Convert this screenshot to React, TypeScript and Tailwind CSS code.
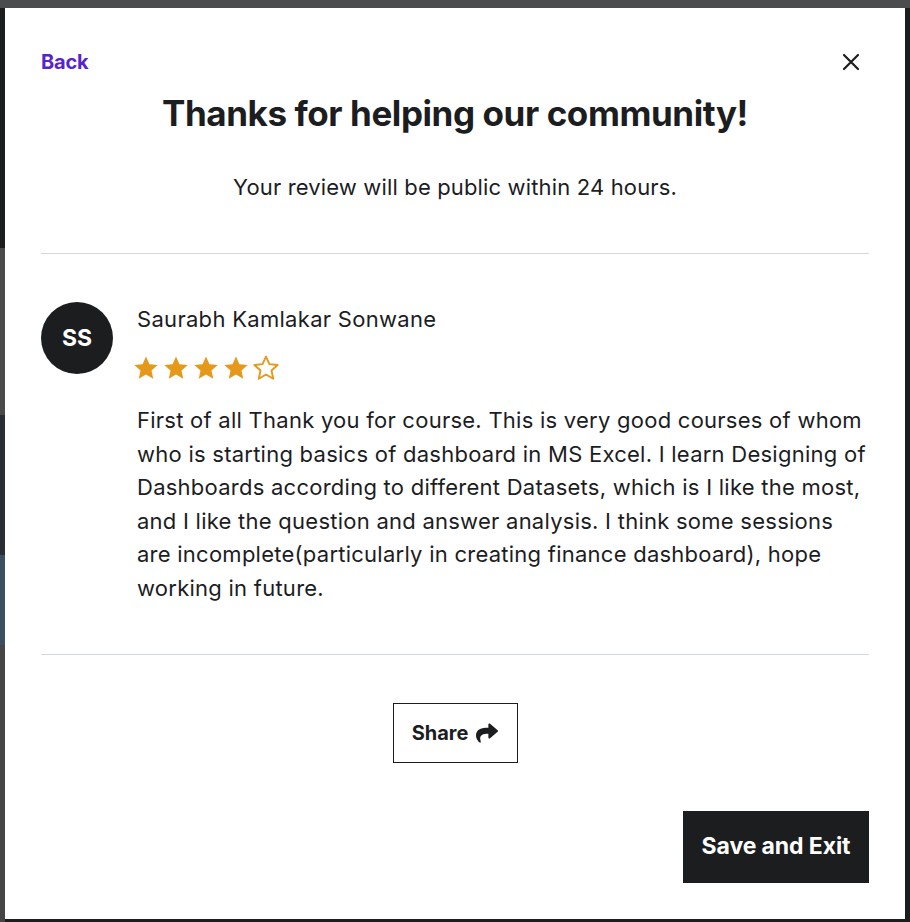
import React from "react";
import { FaShare } from "react-icons/fa";

const Star = ({ filled }: { filled: boolean }) => (
  <svg width="28" height="28" viewBox="0 0 24 24" className="shrink-0">
    <path
      d="M12 2.2l2.95 6.5 7.05.75-5.3 4.75 1.5 7-6.2-3.6-6.2 3.6 1.5-7L2 9.45l7.05-.75z"
      fill={filled ? "#e59819" : "none"}
      stroke="#e59819"
      strokeWidth={filled ? 0 : 1.6}
      strokeLinejoin="round"
    />
  </svg>
);

export default function App() {
  return (
    <div
      className="w-[910px] h-[922px] bg-[#1c1d1f] flex flex-col overflow-hidden"
      style={{ fontFamily: "Inter, 'Noto Sans', sans-serif" }}
    >
      <div className="h-[8px] bg-[#4b4c4d] shrink-0" />
      <div className="flex flex-1">
        <div className="w-[5px] flex flex-col shrink-0">
          <div className="h-[240px] bg-[#1c1d1f]" />
          <div className="h-[167px] bg-[#4a4a4a]" />
          <div className="h-[140px] bg-[#2a2d33]" />
          <div className="h-[90px] bg-[#3a5060]" />
          <div className="flex-1 bg-[#454545]" />
        </div>
        <div className="w-[900px] h-[911px] bg-white px-[36px] flex flex-col text-[#1c1d1f]">
          <div className="flex items-center justify-between mt-[40px] h-[28px]">
            <span className="text-[#5624d0] font-bold text-[20px] tracking-[-0.2px]">Back</span>
            <svg width="20" height="20" viewBox="0 0 20 20" className="mr-[8px]">
              <path d="M3 3L17 17M17 3L3 17" stroke="#1c1d1f" strokeWidth="2.2" strokeLinecap="round" />
            </svg>
          </div>
          <h1 className="text-center font-bold text-[35px] leading-[44px] mt-[15px] tracking-[-0.42px]">
            Thanks for helping our community!
          </h1>
          <p className="text-center text-[22px] leading-[30px] mt-[37px] tracking-[0.15px]">
            Your review will be public within 24 hours.
          </p>
          <div className="h-px bg-[#d1d7dc] mt-[51px] shrink-0" />
          <div className="flex gap-[24px] pt-[48px] pb-[48px]">
            <div className="w-[72px] h-[72px] rounded-full bg-[#1c1d1f] text-white font-bold text-[23px] flex items-center justify-center shrink-0">
              SS
            </div>
            <div className="flex flex-col">
              <div className="text-[22px] leading-[30px] mt-[2px] tracking-[0.3px]">Saurabh Kamlakar Sonwane</div>
              <div className="flex gap-[2px] ml-[-5px] mt-[20px]">
                <Star filled />
                <Star filled />
                <Star filled />
                <Star filled />
                <Star filled={false} />
              </div>
              <p className="text-[22px] leading-[33.6px] mt-[22px] tracking-[0.25px]">
                First of all Thank you for course. This is very good courses of whom who is starting basics of
                dashboard in MS Excel. I learn Designing of Dashboards according to different Datasets, which is I
                like the most, and I like the question and answer analysis. I think some sessions are
                incomplete(particularly in creating finance dashboard), hope working in future.
              </p>
            </div>
          </div>
          <div className="h-px bg-[#d1d7dc] shrink-0" />
          <div className="flex justify-center mt-[48px]">
            <button className="w-[125px] h-[60px] border border-[#1c1d1f] flex items-center justify-center gap-[8px] font-bold text-[20px]">
              Share
              <FaShare className="w-[22px] h-[22px]" />
            </button>
          </div>
          <div className="flex justify-end mt-[48px]">
            <button className="w-[186px] h-[72px] bg-[#1c1d1f] text-white font-bold text-[23px] tracking-[-0.1px]">
              Save and Exit
            </button>
          </div>
        </div>
        <div className="w-[5px] bg-[#1c1d1f] shrink-0" />
      </div>
    </div>
  );
}
